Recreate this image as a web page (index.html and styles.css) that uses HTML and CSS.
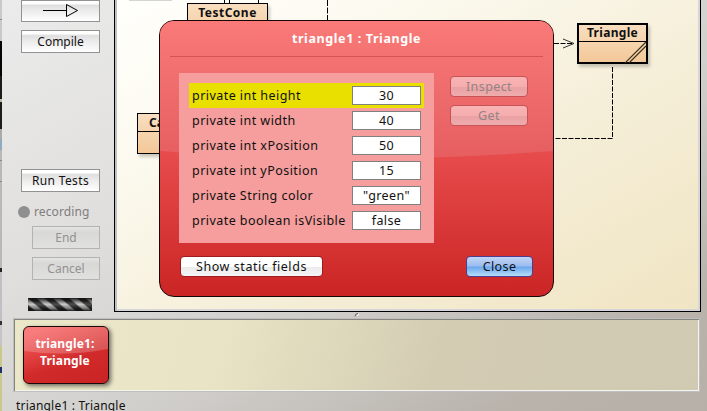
FILE: index.html
```
<!DOCTYPE html>
<html lang="en">
<head>
<meta charset="utf-8">
<title>BlueJ</title>
<link rel="stylesheet" href="styles.css">
</head>
<body>
<div class="window">
  <div class="backdrop"></div>
  <div class="frame">
    <div class="main">
      <aside class="sidebar">
        <button class="tool arrow"><svg width="36" height="14" viewBox="0 0 36 14"><path d="M0 6.500H23M23.500 .5V12.500L34.500 6.500Z" fill="none" stroke="#000"/></svg></button>
        <button class="tool compile">Compile</button>
        <button class="tool run">Run Tests</button>
        <div class="recording"><i class="dot"></i><span>recording</span></div>
        <button class="tool small" disabled>End</button>
        <button class="tool small cancel" disabled>Cancel</button>
        <div class="progress"></div>
      </aside>
      <section class="canvas">
        <svg class="links" width="583" height="309" viewBox="117 0 583 309" fill="none" stroke="#000">
          <path d="M129 .5H172" stroke="#d4d4d0"/>
          <path d="M224.500 0V3M229.500 0V3M258.500 0V3"/>
          <path d="M327.500 0V22" stroke-dasharray="6 1.500"/>
          <path d="M554 43.500H573" stroke-dasharray="5 1.500"/>
          <path d="M563 39L574 43.500L563 48" stroke="#333"/>
          <path d="M612.500 67V138.500H554" stroke-dasharray="5 1.500"/>
        </svg>
        <div class="class-box testcone"><b>TestCone</b></div>
        <div class="class-box canvas-class"><b>Canvas</b></div>
        <div class="class-box triangle"><b>Triangle</b>
          <svg width="22" height="22" viewBox="0 0 22 22" stroke="#3d3020" stroke-width="1.200"><path d="M0 22L21 1M4 22L21 5"/></svg>
        </div>
      </section>
    </div>
    <div class="splitter"><svg width="6" height="5" viewBox="0 0 6 5"><path d="M1 4.500Q1 1.500 4 1.500" fill="none" stroke="#666"/><path d="M3 4L5 2" stroke="#fff"/></svg></div>
    <div class="bench">
      <div class="object"><svg class="shine" viewBox="0 0 84 27" preserveAspectRatio="none"><path d="M0 0H84V22Q42 30 0 24Z"/></svg><span>triangle1:<br>Triangle</span></div>
    </div>
    <footer>triangle1 : Triangle</footer>
  </div>
</div>

<div class="dialog">
  <svg class="gloss" viewBox="0 0 393 139" preserveAspectRatio="none"><defs><linearGradient id="g" x1="0" y1="0" x2="0" y2="1"><stop offset="0" stop-color="#f97a78"/><stop offset="1" stop-color="#e65e60"/></linearGradient></defs><path d="M0 0H393V130Q196 145 0 130Z" fill="url(#g)"/></svg>
  <h1>triangle1 : Triangle</h1>
  <div class="body">
    <div class="fields">
      <div class="row selected"><label>private int height</label><output>30</output></div>
      <div class="row"><label>private int width</label><output>40</output></div>
      <div class="row"><label>private int xPosition</label><output>50</output></div>
      <div class="row"><label>private int yPosition</label><output>15</output></div>
      <div class="row"><label>private String color</label><output>"green"</output></div>
      <div class="row"><label>private boolean isVisible</label><output>false</output></div>
    </div>
    <div class="actions">
      <button class="btn" disabled>Inspect</button>
      <button class="btn" disabled>Get</button>
    </div>
  </div>
  <div class="buttons">
    <button class="btn static">Show static fields</button>
    <button class="btn close">Close</button>
  </div>
</div>
</body>
</html>
```
FILE: styles.css
```
* { box-sizing: border-box; }
body {
  margin: 0;
  width: 707px;
  height: 411px;
  overflow: hidden;
  position: relative;
  font: 12px/16px "Noto Sans", sans-serif;
  color: #111;
}
button { font: inherit; letter-spacing: inherit; color: inherit; margin: 0; padding: 0; white-space: nowrap; }

.window { display: flex; width: 707px; height: 411px; }
.backdrop {
  width: 2px;
  background: linear-gradient(#c9c9cc 0 19px, #888 19px 20px, #c9c9cc 20px 41px, #050505 41px 76px, #1c1c19 76px 99px, #bbb9a8 99px 102px, #1c1c19 102px 129px, #aaa 129px 139px, #91a9bd 139px 150px, #b8b8bb 150px 160px, #888 160px 161px, #b8b8bb 161px 181px, #888 181px 182px, #b8b8bb 182px 268px, #222 268px 272px, #c0c0c4 272px 321px, #333 321px 325px, #c4c4c9 325px 346px, #c9c98c 346px 367px, #22306a 367px 373px, #c9c98c 373px);
}
.frame {
  flex: 1;
  display: flex;
  flex-direction: column;
  background: linear-gradient(149deg, #ebebeb, #dfdedc 35%, #d0cecb 60%, #b9b3ac 85%, #b7b0a8);
}
.main { display: flex; height: 312px; }

.sidebar { width: 112px; display: flex; flex-direction: column; align-items: flex-end; padding-right: 14px; }
.tool {
  width: 79px;
  height: 23px;
  border: 1px solid #929292;
  background: linear-gradient(#fff 0 12%, #dfdfdf 22%, #ececec 50%, #fff);
  line-height: 20px;
  display: flex;
  justify-content: center;
  align-items: center;
}
.arrow { height: 22px; }
.compile { margin-top: 8px; }
.run { margin-top: 116px; letter-spacing: .35px; }
.recording { display: flex; align-items: center; align-self: flex-start; gap: 4px; margin: 11px 0 6px 16px; height: 17px; color: #7d7d7d; letter-spacing: .1px; }
.dot { width: 12px; height: 12px; border-radius: 50%; background: #8f8f8f; }
.small { width: 68px; color: #929292; border-color: #b3b3b2; background: linear-gradient(#e4e4e2, #d8d8d6 25%, #e0e0de); }
.cancel { margin-top: 8px; }
.progress {
  width: 64px;
  height: 13px;
  margin: 18px 8px 0 0;
  background: linear-gradient(#111e 0, #1118 20%, #fff3 48%, #1116 80%, #111e), repeating-linear-gradient(40deg, #222 0 4px, #bdbdbd 5.500px 9px, #222 10.500px);
}

.canvas {
  position: relative;
  width: 587px;
  overflow: hidden;
  border: 1px solid #000;
  border-top: 0;
  box-shadow: inset 2px 0 #bfc0c2, inset -2px -2px #d5d5da;
  background: linear-gradient(150deg, #fffffc, #fcfaf0 25%, #f5eed8 60%, #f0e5c3);
}
.links { position: absolute; left: 2px; top: 0; }
.class-box {
  position: absolute;
  border: 1px solid #000;
  background: linear-gradient(#f8dec0, #f3c898);
  box-shadow: 2px 3px 3px #0003;
  text-align: center;
}
.class-box b { display: block; height: 18px; line-height: 18px; border-bottom: 1px solid #000; }
.testcone { left: 72px; top: 3px; width: 81px; height: 41px; letter-spacing: .5px; }
.canvas-class { left: 22px; top: 113px; width: 70px; height: 41px; }
.canvas-class b { text-align: left; padding-left: 11px; }
.triangle { left: 462px; top: 23px; width: 71px; height: 41px; border-width: 2px; letter-spacing: .3px; }
.triangle b { height: 17px; line-height: 16px; }
.triangle svg { position: absolute; right: -1px; bottom: -1px; }

.splitter { height: 6px; padding-left: 352px; line-height: 0; }
.bench {
  width: 687px;
  height: 74px;
  margin-left: 11px;
  padding: 7px 9px;
  border: 1px solid #bfbfbf;
  box-shadow: inset 1px 1px #85857d, inset -1px -1px #f5f5f0;
  background: linear-gradient(105deg, #ebe7c9, #e9e4c5 30%, #d3ccb3 62%, #d1cab2);
}
.object {
  position: relative;
  width: 86px;
  height: 58px;
  display: grid;
  place-items: center;
  border: 1px solid #1c0808;
  border-radius: 6px;
  background: linear-gradient(160deg, #f85c5c 10%, #d02a2a 60%, #cb2323);
  box-shadow: 2px 2px 4px #0008;
  color: #fff;
  font-weight: bold;
  line-height: 17px;
  letter-spacing: .15px;
  text-align: center;
}
.shine { position: absolute; left: 0; top: 0; width: 100%; height: 27px; fill: #fff3; border-radius: 5px 5px 0 0; }
.object span { position: relative; top: -3px; left: -1px; }
footer { padding: 6px 0 0 14px; height: 19px; line-height: 16px; letter-spacing: .2px; }

.dialog {
  position: absolute;
  left: 159px;
  top: 20px;
  width: 395px;
  height: 277px;
  overflow: hidden;
  border: 1px solid #160606;
  border-radius: 15px;
  padding: 0 10px;
  background: linear-gradient(#e84d4d 46%, #cb2525);
  font-size: 12.5px;
  letter-spacing: .4px;
}
.gloss { position: absolute; left: 0; top: 0; width: 100%; height: 139px; }
h1 { position: relative; margin: 0; height: 36px; border-bottom: 1px solid #d25455; color: #fff; font-size: 12.5px; line-height: 35px; letter-spacing: .6px; text-align: center; }
.body { position: relative; display: flex; gap: 16px; padding: 16px 0 0 9px; }
.fields { width: 255px; height: 170px; padding: 10px; background: #f59e9d; }
.row { display: flex; align-items: center; justify-content: space-between; height: 25px; padding: 0 3px; width: 235px; }
.selected { background: #e9e000; }
.row label { letter-spacing: .45px; white-space: nowrap; }
output { width: 69px; height: 19px; border: 1px solid #808080; background: #fff; text-align: center; line-height: 17px; }
.actions { display: flex; flex-direction: column; gap: 8px; padding-top: 3px; }
.btn {
  width: 78px;
  height: 21px;
  line-height: 19px;
  border: 1px solid #9c1c20;
  border-radius: 4px;
  background: linear-gradient(#fff, #fff 50%, #ececec 55%, #f5f5f5);
}
.btn:disabled { color: #928384; border-color: #c55357; background: linear-gradient(#fab4b4, #f5adae 50%, #eaa2a4 55%, #efacad); }
.buttons { position: relative; display: flex; justify-content: space-between; padding: 13px 10px 0; }
.static { width: 143px; letter-spacing: .55px; }
.close { width: 67px; border-color: #4e3e91; background: linear-gradient(#c4d5f5, #9abcf0 48%, #69a6ed 52%, #b5def9); }
```
